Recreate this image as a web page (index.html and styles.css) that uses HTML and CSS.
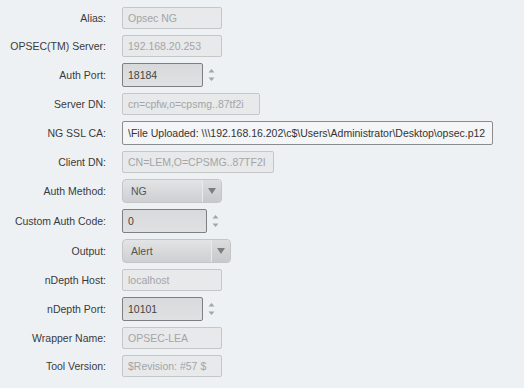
FILE: index.html
```html
<!DOCTYPE html>
<html lang="en">
<head>
  <meta charset="UTF-8">
  <meta name="viewport" content="width=device-width, initial-scale=1.0">
  <title>OPSEC Settings</title>
  <link rel="stylesheet" href="styles.css">
</head>
<body>
  <div class="form">
    <label class="lbl">Alias:</label>
    <div class="field"><input class="ro w100" value="Opsec NG" readonly></div>

    <label class="lbl">OPSEC(TM) Server:</label>
    <div class="field"><input class="ro w100" value="192.168.20.253" readonly></div>

    <label class="lbl">Auth Port:</label>
    <div class="field">
      <input class="num w81" value="18184">
      <span class="spin">
        <svg width="7" height="14" viewBox="0 0 7 14"><path d="M3.5 1 L6.5 4.5 L0.5 4.5 Z" fill="#a3a5a8"/><path d="M0.5 9.5 L6.5 9.5 L3.5 13 Z" fill="#a3a5a8"/></svg>
      </span>
    </div>

    <label class="lbl">Server DN:</label>
    <div class="field"><input class="ro w138" value="cn=cpfw,o=cpsmg..87tf2i" readonly></div>

    <label class="lbl">NG SSL CA:</label>
    <div class="field"><input class="txt w370" value="\File Uploaded: \\\192.168.16.202\c$\Users\Administrator\Desktop\opsec.p12"></div>

    <label class="lbl">Client DN:</label>
    <div class="field"><input class="ro w152" value="CN=LEM,O=CPSMG..87TF2I" readonly></div>

    <label class="lbl">Auth Method:</label>
    <div class="field">
      <div class="select w100">
        <span class="sel-val">NG</span>
        <span class="sel-btn"><svg width="8" height="6" viewBox="0 0 8 6"><path d="M0 0 L8 0 L4 6 Z" fill="#7b7d80"/></svg></span>
      </div>
    </div>

    <label class="lbl">Custom Auth Code:</label>
    <div class="field">
      <input class="num w85" value="0">
      <span class="spin">
        <svg width="7" height="14" viewBox="0 0 7 14"><path d="M3.5 1 L6.5 4.5 L0.5 4.5 Z" fill="#a3a5a8"/><path d="M0.5 9.5 L6.5 9.5 L3.5 13 Z" fill="#a3a5a8"/></svg>
      </span>
    </div>

    <label class="lbl">Output:</label>
    <div class="field">
      <div class="select w109">
        <span class="sel-val">Alert</span>
        <span class="sel-btn"><svg width="8" height="6" viewBox="0 0 8 6"><path d="M0 0 L8 0 L4 6 Z" fill="#7b7d80"/></svg></span>
      </div>
    </div>

    <label class="lbl">nDepth Host:</label>
    <div class="field"><input class="ro w100" value="localhost" readonly></div>

    <label class="lbl">nDepth Port:</label>
    <div class="field">
      <input class="num w81" value="10101">
      <span class="spin">
        <svg width="7" height="14" viewBox="0 0 7 14"><path d="M3.5 1 L6.5 4.5 L0.5 4.5 Z" fill="#a3a5a8"/><path d="M0.5 9.5 L6.5 9.5 L3.5 13 Z" fill="#a3a5a8"/></svg>
      </span>
    </div>

    <label class="lbl">Wrapper Name:</label>
    <div class="field"><input class="ro w100" value="OPSEC-LEA" readonly></div>

    <label class="lbl">Tool Version:</label>
    <div class="field"><input class="ro w100" value="$Revision: #57 $" readonly></div>
  </div>
</body>
</html>
```

FILE: styles.css
```css
body {
  font-family: "Liberation Sans", Arial, sans-serif;
  font-size: 10.5px;
  background-color: #eef1f4;
  margin: 0;
  padding: 0;
  color: #333;
}
.form {
  display: grid;
  grid-template-columns: 106px 1fr;
  column-gap: 16px;
  row-gap: 6px;
  padding-top: 7px;
}
.lbl {
  text-align: right;
  align-self: center;
  color: #3a3a3a;
  white-space: nowrap;
}
.field {
  display: flex;
  align-items: center;
}
input {
  font-family: "Liberation Sans", Arial, sans-serif;
  font-size: 10.5px;
  box-sizing: border-box;
  margin: 0;
  padding: 0 5px;
  outline: none;
}
.ro {
  height: 22px;
  background-color: #e7e9eb;
  border: 1px solid #c4c6c8;
  border-radius: 2px;
  color: #a3a5a7;
}
.num {
  height: 24px;
  background: linear-gradient(#d8d9da, #e0e1e2);
  border: 1px solid #7d7f81;
  border-radius: 2px;
  color: #444;
}
.txt {
  height: 24px;
  background-color: #f3f5f7;
  border: 1px solid #8a8c8e;
  border-radius: 2px;
  color: #333;
}
.spin {
  display: flex;
  margin-left: 5px;
}
.select {
  display: flex;
  box-sizing: border-box;
  height: 24px;
  border: 1px solid #c3c5c7;
  border-radius: 4px;
  background: linear-gradient(#e3e4e6, #cdcfd1);
  color: #555;
  overflow: hidden;
}
.sel-val {
  flex: 1;
  padding-left: 8px;
  line-height: 22px;
}
.sel-btn {
  width: 18px;
  display: flex;
  align-items: center;
  justify-content: center;
  border-left: 1px solid #e9eaeb;
  background: linear-gradient(#dcdddf, #c6c8ca);
}
.w81 { width: 81px; }
.w85 { width: 85px; }
.w100 { width: 100px; }
.w109 { width: 109px; }
.w138 { width: 138px; }
.w152 { width: 152px; }
.w370 { width: 371px; }
```
